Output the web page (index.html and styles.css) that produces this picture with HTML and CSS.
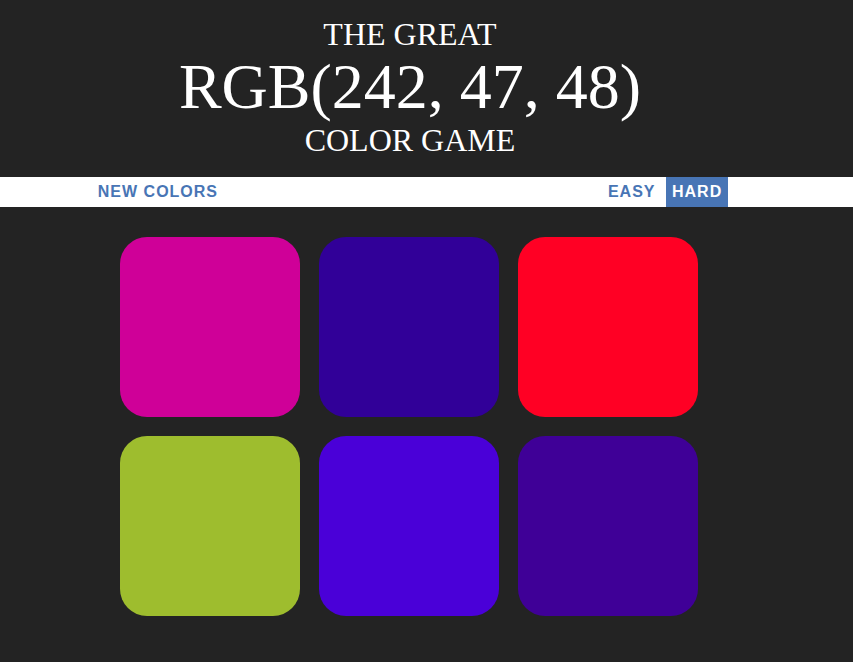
FILE: index.html
```html
<!DOCTYPE html>
<html>
<head>
<meta charset="utf-8">
<title>Color Game</title>
<link rel="stylesheet" href="styles.css">
</head>
<body>
<h1 class="title">The Great<br><span class="color-display">RGB(242, 47, 48)</span><br>Color Game</h1>
<div class="stripe">
  <div class="stripe-inner">
    <button class="btn">New Colors</button>
    <span class="message"></span>
    <button class="btn">Easy</button>
    <button class="btn selected">Hard</button>
  </div>
</div>
<div class="board">
  <div class="container">
    <div class="square" style="background: rgb(207, 0, 152);"></div>
    <div class="square" style="background: rgb(49, 0, 152);"></div>
    <div class="square" style="background: rgb(255, 0, 36);"></div>
    <div class="square" style="background: rgb(158, 189, 46);"></div>
    <div class="square" style="background: rgb(74, 0, 216);"></div>
    <div class="square" style="background: rgb(63, 0, 151);"></div>
  </div>
</div>
</body>
</html>
```

FILE: styles.css
```css
html, body {
  margin: 0;
  padding: 0;
}
body {
  background: #232323;
  font-family: "Liberation Sans", Arial, sans-serif;
}
.title {
  width: 820px;
  margin: 0;
  padding: 17px 0 19px;
  color: #ffffff;
  font-family: "Liberation Serif", "Times New Roman", serif;
  font-weight: normal;
  font-size: 32px;
  line-height: 1.1;
  text-align: center;
  text-transform: uppercase;
}
.color-display {
  font-size: 200%;
}
.stripe {
  background: #ffffff;
  height: 30px;
}
.stripe-inner {
  width: 820px;
  height: 100%;
  text-align: center;
}
.message {
  display: inline-block;
  width: 369px;
}
.btn {
  height: 100%;
  margin: 0;
  padding: 1px 6px;
  border: none;
  background: none;
  color: #4875b5;
  font-family: "Liberation Sans", Arial, sans-serif;
  font-size: 16px;
  font-weight: 700;
  letter-spacing: 1px;
  text-transform: uppercase;
  outline: none;
  vertical-align: top;
}
.btn.selected {
  background: #4875b5;
  color: #ffffff;
}
.board {
  width: 820px;
  padding-top: 1px;
}
.container {
  width: 600px;
  margin: 20px auto;
  display: flex;
  flex-wrap: wrap;
}
.square {
  width: 180px;
  aspect-ratio: 1 / 1;
  margin: 9.5px;
  border-radius: 15%;
}
```
